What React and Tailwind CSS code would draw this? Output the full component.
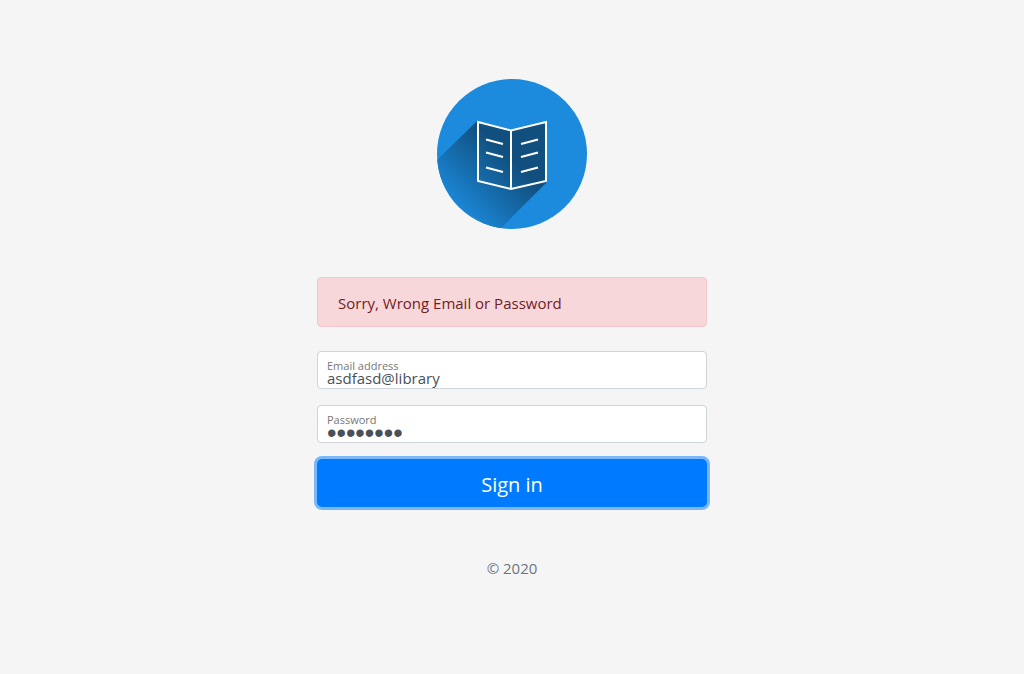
import { useState } from "react";

function Logo() {
  return (
    <svg viewBox="0 0 150 150" className="size-[150px]" role="img" aria-label="Library">
      <defs>
        <clipPath id="disc">
          <circle cx="75" cy="75" r="75" />
        </clipPath>
        <linearGradient id="shade" gradientUnits="userSpaceOnUse" x1="71" y1="76" x2="16" y2="131">
          <stop offset="0" stopColor="#104f7e" />
          <stop offset="1" stopColor="#1c8bdd" />
        </linearGradient>
      </defs>
      <circle cx="75" cy="75" r="75" fill="#1c8bdd" />
      <g clipPath="url(#disc)">
        <path d="M40 42 L74 51 L110 43 V103 L60 153 H-5 V86 Z" fill="url(#shade)" />
      </g>
      <g fill="none" stroke="#fff" strokeWidth="2">
        <path d="M41 43 L74 51.500 L109 43 V102 L74 110 L41 102 Z" />
        <path d="M74 51 V110" />
        <path d="M49 60.500 L66 65 M49 73.500 L66 78 M49 88.500 L66 93" />
        <path d="M84 65 L101 60.500 M84 78 L101 73.500 M84 93 L101 88.500" />
      </g>
    </svg>
  );
}

function Field({ id, label, type, value, onChange, textClass }) {
  return (
    <div className="relative mb-4">
      <input
        id={id}
        type={type}
        value={value}
        onChange={(e) => onChange(e.target.value)}
        className={`block h-[38px] w-full rounded border border-[#ced4da] bg-white px-[9px] text-[#495057] outline-none ${textClass}`}
      />
      <label htmlFor={id} className="pointer-events-none absolute top-2 left-[9px] pl-px text-[11px] leading-[14px] text-[#777777]">
        {label}
      </label>
    </div>
  );
}

export default function App() {
  const [email, setEmail] = useState("asdfasd@library");
  const [password, setPassword] = useState("asdfasdf");

  return (
    <main className="flex min-h-screen items-center justify-center bg-[#f5f5f5] font-['Open_Sans','Noto_Sans',sans-serif]">
      <form className="w-full max-w-[420px] p-[15px]" onSubmit={(e) => e.preventDefault()}>
        <div className="mb-12 flex justify-center">
          <Logo />
        </div>
        <div role="alert" className="mb-6 rounded border border-[#f5c6cb] bg-[#f8d7da] px-5 pt-[13px] pb-[11px] text-[15px] leading-6 text-[#721c24]">
          Sorry, Wrong Email or Password
        </div>
        <Field id="email" label="Email address" type="email" value={email} onChange={setEmail} textClass="pt-4 text-[15px] leading-5" />
        <Field
          id="password"
          label="Password"
          type="password"
          value={password}
          onChange={setPassword}
          textClass="pt-5 font-['Liberation_Sans',sans-serif] text-[27px] leading-5"
        />
        <button type="submit" className="block h-12 w-full rounded-[5px] bg-[#007bff] pt-1 text-[20px] leading-7 text-white ring-[3px] ring-[#007bff]/50 outline-none">
          Sign in
        </button>
        <p className="mt-12 mb-4 pt-px text-center text-[15px] leading-6 text-[#6c757d]">© 2020</p>
      </form>
    </main>
  );
}
